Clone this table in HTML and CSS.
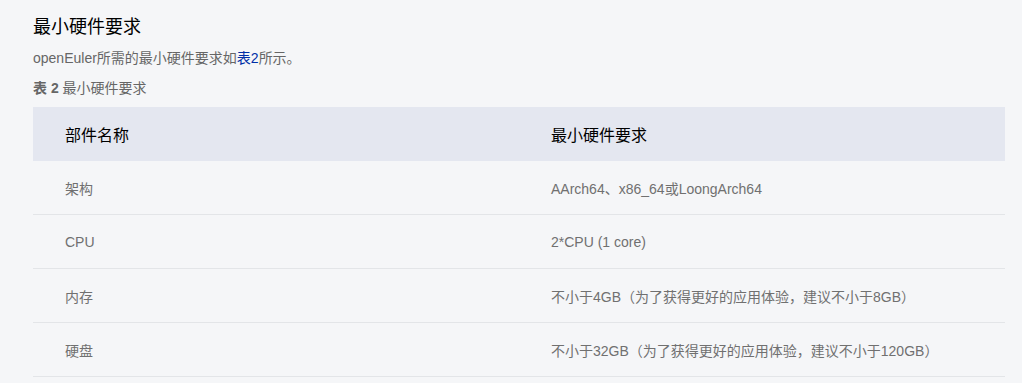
FILE: index.html
```html
<!DOCTYPE html>
<html lang="zh-CN">
<head>
<meta charset="utf-8">
<link rel="stylesheet" href="styles.css">
</head>
<body>
<div class="doc">
  <h2 class="title">最小硬件要求</h2>
  <p class="desc">openEuler所需的最小硬件要求如<a class="link" href="#">表2</a>所示。</p>
  <p class="caption"><b>表 2</b> 最小硬件要求</p>
  <table class="hw">
    <thead>
      <tr><th>部件名称</th><th>最小硬件要求</th></tr>
    </thead>
    <tbody>
      <tr><td>架构</td><td>AArch64、x86_64或LoongArch64</td></tr>
      <tr><td>CPU</td><td>2*CPU (1 core)</td></tr>
      <tr><td>内存</td><td>不小于4GB（为了获得更好的应用体验，建议不小于8GB）</td></tr>
      <tr><td>硬盘</td><td>不小于32GB（为了获得更好的应用体验，建议不小于120GB）</td></tr>
    </tbody>
  </table>
</div>
</body>
</html>
```

FILE: styles.css
```css
html, body {
  margin: 0;
  padding: 0;
  background: #f5f6f8;
}
body {
  font-family: "Liberation Sans", "Noto Sans CJK SC", sans-serif;
  color: #555;
}
.doc {
  padding: 12px 17px 0 33px;
}
.title {
  margin: 0;
  font-size: 18px;
  font-weight: normal;
  color: #000;
  line-height: 30px;
}
.desc {
  margin: 5px 0 0;
  font-size: 14px;
  line-height: 22px;
  color: #666;
}
.link {
  color: #002fa7;
  text-decoration: none;
}
.caption {
  margin: 8px 0 0;
  font-size: 14px;
  line-height: 22px;
  color: #666;
}
.caption b {
  font-weight: bold;
}
.hw {
  margin-top: 8px;
  width: 972px;
  border-collapse: collapse;
  table-layout: fixed;
}
.hw th {
  background: #e4e7f0;
  height: 54px;
  padding: 0 32px;
  text-align: left;
  font-size: 16px;
  font-weight: normal;
  color: #000;
}
.hw td {
  height: 53px;
  padding: 0 32px;
  font-size: 14px;
  color: #707070;
  border-bottom: 1px solid #e3e5e8;
}
```
